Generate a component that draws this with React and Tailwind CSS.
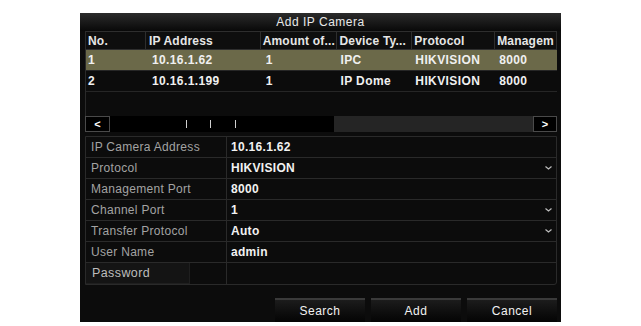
import React from "react";

const columns = [
  { label: "No.", w: "w-[60px]", pl: "pl-[2px]", cell: "pl-[2px]" },
  { label: "IP Address", w: "w-[115px]", pl: "pl-[3px]", cell: "pl-[6px]" },
  { label: "Amount of...", w: "w-[77px]", pl: "pl-[2px]", cell: "pl-[5px]" },
  { label: "Device Ty...", w: "w-[75px]", pl: "pl-[2px]", cell: "pl-[3px]" },
  { label: "Protocol", w: "w-[83px]", pl: "pl-[2px]", cell: "pl-[3px]" },
  { label: "Managem", w: "w-[62px]", pl: "pl-[2px]", cell: "pl-[4px]" },
];

const cameras = [
  ["1", "10.16.1.62", "1", "IPC", "HIKVISION", "8000"],
  ["2", "10.16.1.199", "1", "IP Dome", "HIKVISION", "8000"],
];

const fields = [
  { label: "IP Camera Address", value: "10.16.1.62" },
  { label: "Protocol", value: "HIKVISION", select: true },
  { label: "Management Port", value: "8000" },
  { label: "Channel Port", value: "1", select: true },
  { label: "Transfer Protocol", value: "Auto", select: true },
  { label: "User Name", value: "admin" },
  { label: "Password", value: "", password: true },
];

const Chevron = () => (
  <svg width="7" height="4" viewBox="0 0 7 4" className="mr-[4px]">
    <path d="M0.5 0.5 L3.5 3 L6.5 0.5" stroke="#bdbdbd" strokeWidth="1.2" fill="none" />
  </svg>
);

export default function App() {
  return (
    <div
      className="w-[641px] h-[326px] bg-white overflow-hidden pt-[13px]"
      style={{ fontFamily: '"Liberation Sans", Arial, sans-serif' }}
    >
      <div className="ml-[80px] w-[481px] h-[309px] bg-[#0c0c0c] flex flex-col">
        {/* title bar */}
        <div className="h-[18px] flex items-center justify-center bg-gradient-to-b from-[#2c2c2c] to-[#090909] text-[12px] tracking-[0.5px] text-[#e8e8e8]">
          Add IP Camera
        </div>

        {/* camera list */}
        <div className="px-[5px] pr-[4px]">
          <div className="border-l border-[#2a2a2a]">
            <div className="flex h-[19px] bg-[#0e0e0e]">
              {columns.map((c) => (
                <div
                  key={c.label}
                  className={`${c.w} ${c.pl} flex items-center border border-[#2e2e2e] border-l-0 text-[12px] font-bold tracking-[0.2px] text-[#e6e6e6] whitespace-nowrap overflow-hidden`}
                >
                  {c.label}
                </div>
              ))}
            </div>
            {cameras.map((row, i) => (
              <div
                key={i}
                className={`flex h-[21px] border-b border-[#262626] ${i === 0 ? "bg-[#6b6949]" : "bg-[#0c0c0c]"}`}
              >
                {row.map((v, j) => (
                  <div
                    key={j}
                    className={`${columns[j].w} ${columns[j].cell} flex items-center text-[12px] font-bold tracking-[0.4px] text-[#f0f0f0] whitespace-nowrap`}
                  >
                    {v}
                  </div>
                ))}
              </div>
            ))}
            <div className="h-[24px]" />
          </div>

          {/* scroll bar */}
          <div className="flex h-[16px] bg-[#111]">
            <div className="w-[25px] border border-[#4a4a4a] bg-black flex items-center justify-center text-[11px] font-bold text-white">
              &lt;
            </div>
            <div className="w-[224px] bg-black relative">
              <span className="absolute left-[76px] top-[4px] w-[1px] h-[8px] bg-[#d0d0d0]" />
              <span className="absolute left-[100px] top-[4px] w-[1px] h-[8px] bg-[#d0d0d0]" />
              <span className="absolute left-[125px] top-[4px] w-[1px] h-[8px] bg-[#d0d0d0]" />
            </div>
            <div className="flex-1 bg-[#252525]" />
            <div className="w-[24px] border border-[#4a4a4a] bg-black flex items-center justify-center text-[11px] font-bold text-white">
              &gt;
            </div>
          </div>

          {/* details form */}
          <div className="mt-[4px] border border-[#2a2a2a] rounded-br-[3px]">
            {fields.map((f, i) => (
              <div
                key={f.label}
                className={`flex h-[21px] ${i < fields.length - 1 ? "border-b border-[#2a2a2a]" : ""}`}
              >
                <div className="w-[141px] border-r border-[#2a2a2a] flex items-center">
                  {f.password ? (
                    <div className="w-[104px] h-[21px] bg-[#141414] border-r border-b border-[#1f1f1f] flex items-center pl-[6px] text-[12.5px] tracking-[0.4px] text-[#bdbdbd]">
                      {f.label}
                    </div>
                  ) : (
                    <span className="pl-[5px] text-[12px] tracking-[0.3px] text-[#a3a3a3]">{f.label}</span>
                  )}
                </div>
                <div className="flex-1 flex items-center justify-between pl-[4px] text-[12px] font-bold tracking-[0.3px] text-[#f2f2f2]">
                  <span>{f.value}</span>
                  {f.select && <Chevron />}
                </div>
              </div>
            ))}
          </div>
        </div>

        {/* buttons */}
        <div className="mt-auto flex justify-end gap-[6px] pr-[4px]">
          {["Search", "Add", "Cancel"].map((b) => (
            <div
              key={b}
              className="w-[90px] h-[24px] border-t-2 border-[#3a3a3a] bg-gradient-to-b from-[#1c1c1c] to-[#050505] flex items-center justify-center text-[12px] tracking-[0.5px] text-[#f2f2f2]"
            >
              {b}
            </div>
          ))}
        </div>
      </div>
    </div>
  );
}
